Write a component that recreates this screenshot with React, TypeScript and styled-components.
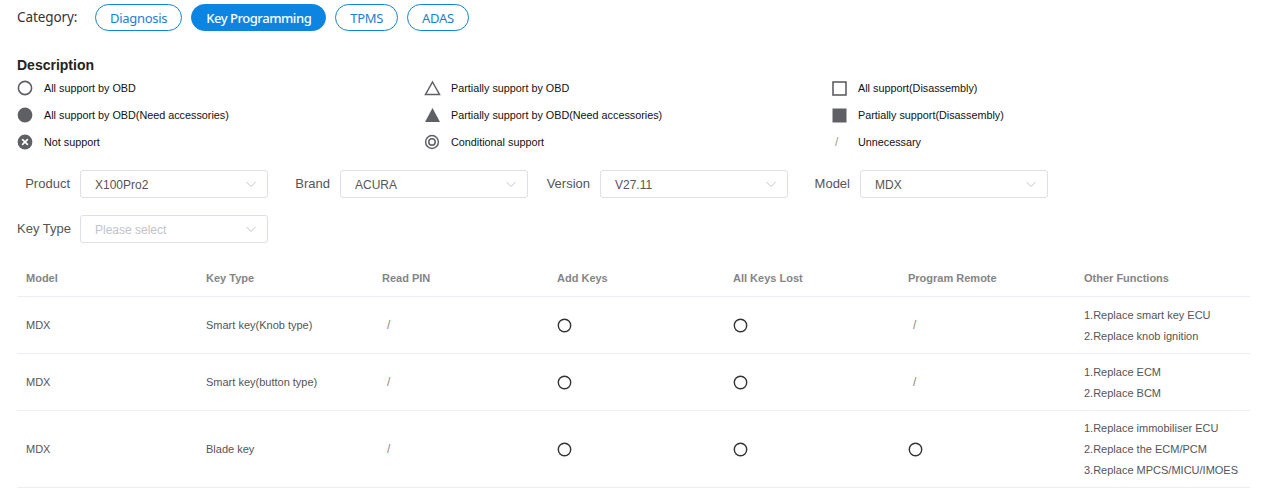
import { FC } from "react";
import styled, { createGlobalStyle } from "styled-components";

type Mark = "circle" | "slash";

interface Row {
  model: string;
  keyType: string;
  readPin: Mark;
  addKeys: Mark;
  allLost: Mark;
  remote: Mark;
  other: string[];
}

const categories = ["Diagnosis", "Key Programming", "TPMS", "ADAS"];

const rows: Row[] = [
  {
    model: "MDX",
    keyType: "Smart key(Knob type)",
    readPin: "slash",
    addKeys: "circle",
    allLost: "circle",
    remote: "slash",
    other: ["1.Replace smart key ECU", "2.Replace knob ignition"],
  },
  {
    model: "MDX",
    keyType: "Smart key(button type)",
    readPin: "slash",
    addKeys: "circle",
    allLost: "circle",
    remote: "slash",
    other: ["1.Replace ECM", "2.Replace BCM"],
  },
  {
    model: "MDX",
    keyType: "Blade key",
    readPin: "slash",
    addKeys: "circle",
    allLost: "circle",
    remote: "circle",
    other: [
      "1.Replace immobiliser ECU",
      "2.Replace the ECM/PCM",
      "3.Replace MPCS/MICU/IMOES",
    ],
  },
];

const GRAY = "#5f6064";

const LegendIcon: FC<{ kind: string }> = ({ kind }) => {
  switch (kind) {
    case "circle":
      return (
        <svg width="16" height="16" viewBox="0 0 16 16">
          <circle cx="8" cy="8" r="6.6" fill="none" stroke={GRAY} strokeWidth="1.6" />
        </svg>
      );
    case "dot":
      return (
        <svg width="16" height="16" viewBox="0 0 16 16">
          <circle cx="8" cy="8" r="7.4" fill={GRAY} />
        </svg>
      );
    case "x":
      return (
        <svg width="16" height="16" viewBox="0 0 16 16">
          <circle cx="8" cy="8" r="7.4" fill={GRAY} />
          <path d="M5.6 5.6 L10.4 10.4 M10.4 5.6 L5.6 10.4" stroke="#fff" strokeWidth="1.6" strokeLinecap="round" />
        </svg>
      );
    case "tri":
      return (
        <svg width="17" height="16" viewBox="0 0 17 16">
          <path d="M8.5 2 L15.5 14.5 L1.5 14.5 Z" fill="none" stroke={GRAY} strokeWidth="1.5" strokeLinejoin="miter" />
        </svg>
      );
    case "triFill":
      return (
        <svg width="17" height="16" viewBox="0 0 17 16">
          <path d="M8.5 1 L16 15 L1 15 Z" fill={GRAY} />
        </svg>
      );
    case "ring":
      return (
        <svg width="16" height="16" viewBox="0 0 16 16">
          <circle cx="8" cy="8" r="6.4" fill="none" stroke={GRAY} strokeWidth="1.5" />
          <circle cx="8" cy="8" r="3.2" fill="none" stroke={GRAY} strokeWidth="1.5" />
        </svg>
      );
    case "square":
      return (
        <svg width="16" height="16" viewBox="0 0 16 16">
          <rect x="2" y="2" width="13" height="13" fill="none" stroke={GRAY} strokeWidth="1.6" />
        </svg>
      );
    case "squareFill":
      return (
        <svg width="16" height="16" viewBox="0 0 16 16">
          <rect x="1.5" y="1.5" width="14" height="14" fill={GRAY} />
        </svg>
      );
    default:
      return <Slash>/</Slash>;
  }
};

const legend = [
  ["circle", "All support by OBD"],
  ["tri", "Partially support by OBD"],
  ["square", "All support(Disassembly)"],
  ["dot", "All support by OBD(Need accessories)"],
  ["triFill", "Partially support by OBD(Need accessories)"],
  ["squareFill", "Partially support(Disassembly)"],
  ["x", "Not support"],
  ["ring", "Conditional support"],
  ["slash", "Unnecessary"],
];

const Chevron = () => (
  <svg width="12" height="12" viewBox="0 0 12 12">
    <path d="M1.5 4 L6 8.5 L10.5 4" fill="none" stroke="#c0c4cc" strokeWidth="1" />
  </svg>
);

const MarkCell: FC<{ mark: Mark }> = ({ mark }) =>
  mark === "circle" ? (
    <svg width="15" height="15" viewBox="0 0 15 15">
      <circle cx="7.5" cy="7.5" r="6.2" fill="none" stroke="#333" strokeWidth="1.4" />
    </svg>
  ) : (
    <TableSlash>/</TableSlash>
  );

const Select: FC<{ label: string; value?: string; placeholder?: string }> = ({
  label,
  value,
  placeholder,
}) => (
  <FormItem>
    <FormLabel>{label}</FormLabel>
    <SelectBox>
      <SelectText $empty={!value}>{value || placeholder}</SelectText>
      <Chevron />
    </SelectBox>
  </FormItem>
);

const headers = [
  "Model",
  "Key Type",
  "Read PIN",
  "Add Keys",
  "All Keys Lost",
  "Program Remote",
  "Other Functions",
];

export default function App() {
  return (
    <Page>
      <GlobalStyle />
      <CategoryBar>
        <CategoryLabel>Category:</CategoryLabel>
        {categories.map((c) => (
          <Pill key={c} $active={c === "Key Programming"}>
            {c}
          </Pill>
        ))}
      </CategoryBar>

      <Title>Description</Title>
      <Legend>
        {legend.map(([kind, text]) => (
          <LegendItem key={text}>
            <IconBox>
              <LegendIcon kind={kind} />
            </IconBox>
            <span>{text}</span>
          </LegendItem>
        ))}
      </Legend>

      <Form>
        <Select label="Product" value="X100Pro2" />
        <Select label="Brand" value="ACURA" />
        <Select label="Version" value="V27.11" />
        <Select label="Model" value="MDX" />
        <Select label="Key Type" placeholder="Please select" />
      </Form>

      <Table>
        <HeadRow>
          {headers.map((h) => (
            <HeadCell key={h}>{h}</HeadCell>
          ))}
        </HeadRow>
        {rows.map((r, idx) => (
          <BodyRow key={idx}>
            <Cell>{r.model}</Cell>
            <Cell>{r.keyType}</Cell>
            <MarkBox>
              <MarkCell mark={r.readPin} />
            </MarkBox>
            <MarkBox>
              <MarkCell mark={r.addKeys} />
            </MarkBox>
            <MarkBox>
              <MarkCell mark={r.allLost} />
            </MarkBox>
            <MarkBox>
              <MarkCell mark={r.remote} />
            </MarkBox>
            <Cell>
              <Lines>
                {r.other.map((o) => (
                  <div key={o}>{o}</div>
                ))}
              </Lines>
            </Cell>
          </BodyRow>
        ))}
      </Table>
    </Page>
  );
}

const GlobalStyle = createGlobalStyle`
  body {
    margin: 0;
    background: #fff;
    font-family: "Liberation Sans", Arial, sans-serif;
  }
`;

const Page = styled.div`
  width: 1270px;
  padding: 4px 20px 0 17px;
  box-sizing: border-box;
`;

const CategoryBar = styled.div`
  display: flex;
  align-items: center;
  gap: 9px;
  height: 27px;
  font-family: "Noto Sans", sans-serif;
`;

const CategoryLabel = styled.span`
  font-size: 13.5px;
  color: #333;
  width: 69px;
  margin-top: -2px;
  letter-spacing: -0.1px;
`;

const Pill = styled.div<{ $active?: boolean }>`
  height: 27px;
  box-sizing: border-box;
  padding: 0 14px;
  border-radius: 14px;
  border: 1px solid #0b84e2;
  background: ${(p) => (p.$active ? "#0b84e2" : "#fff")};
  color: ${(p) => (p.$active ? "#fff" : "#1a7fd6")};
  font-size: 13px;
  font-weight: ${(p) => (p.$active ? 500 : 400)};
  display: flex;
  align-items: center;
  letter-spacing: ${(p) => (p.$active ? "-0.45px" : "-0.3px")};
`;

const Title = styled.div`
  margin-top: 25px;
  font-size: 14px;
  font-weight: bold;
  color: #222;
  line-height: 18px;
`;

const Legend = styled.div`
  display: grid;
  grid-template-columns: 407px 407px 1fr;
  grid-auto-rows: 27px;
`;

const LegendItem = styled.div`
  display: flex;
  align-items: center;
  font-size: 10.8px;
  color: #111;
`;

const IconBox = styled.div`
  width: 27px;
  display: flex;
  align-items: center;
`;

const Slash = styled.span`
  color: #999;
  font-size: 12px;
  padding-left: 4px;
`;

const Form = styled.div`
  display: flex;
  flex-wrap: wrap;
  column-gap: 9px;
  row-gap: 17px;
  margin-top: 15px;
`;

const FormItem = styled.div`
  display: flex;
  align-items: center;
  width: 251px;
`;

const FormLabel = styled.label`
  width: 53px;
  padding-right: 10px;
  text-align: right;
  font-size: 13px;
  color: #555;
  white-space: nowrap;
  margin-top: -2px;
`;

const SelectBox = styled.div`
  flex: 1;
  height: 28px;
  box-sizing: border-box;
  border: 1px solid #dcdfe6;
  border-radius: 3px;
  display: flex;
  align-items: center;
  justify-content: space-between;
  padding: 0 10px 0 14px;
`;

const SelectText = styled.span<{ $empty?: boolean }>`
  font-size: 12px;
  color: ${(p) => (p.$empty ? "#c0c4cc" : "#555")};
  margin-top: 2px;
`;

const Table = styled.div`
  margin-top: 16px;
  width: 1233px;
  font-size: 11px;
`;

const columns = "180px 176px 175px 176px 175px 176px 1fr";

const HeadRow = styled.div`
  display: grid;
  grid-template-columns: ${columns};
  height: 37px;
  border-bottom: 1px solid #ebeef5;
`;

const HeadCell = styled.div`
  display: flex;
  align-items: center;
  padding-left: 9px;
  color: #858585;
  font-weight: bold;
`;

const BodyRow = styled.div`
  display: grid;
  grid-template-columns: ${columns};
  min-height: 56px;
  border-bottom: 1px solid #ebeef5;
`;

const Cell = styled.div`
  display: flex;
  align-items: center;
  padding-left: 9px;
  color: #555;
`;

const MarkBox = styled(Cell)`
  padding-left: 9px;
`;

const TableSlash = styled.span`
  color: #888;
  font-size: 12px;
  padding-left: 5px;
`;

const Lines = styled.div`
  display: flex;
  flex-direction: column;
  gap: 7px;
  line-height: 14px;
  padding: 10px 0 10px;
`;
